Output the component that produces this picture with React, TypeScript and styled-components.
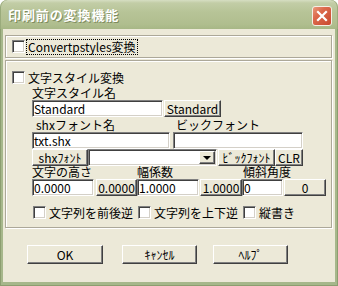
import React from 'react';
import styled, { createGlobalStyle } from 'styled-components';

const GlobalStyle = createGlobalStyle`
  html, body { margin: 0; padding: 0; background: #fff; }
  body { font-family: "Noto Sans CJK JP", sans-serif; font-size: 12px; color: #000; }
  * { box-sizing: border-box; }
`;

const Window = styled.div`
  width: 338px;
  height: 286px;
  display: flex;
  flex-direction: column;
  border-radius: 7px 7px 0 0;
  overflow: hidden;
  background: #a6b78b;
`;

const TitleBar = styled.div`
  height: 29px;
  flex: none;
  display: flex;
  align-items: flex-start;
  justify-content: space-between;
  padding: 0 6px 0 8px;
  background: linear-gradient(
    to bottom,
    #d6dec2 0px,
    #c2cda6 3px,
    #b7c497 12px,
    #b0be8f 24px,
    #a7b786 29px
  );
  border-radius: 7px 7px 0 0;
  box-shadow: inset 1px 0 0 #9aab7c, inset -1px 0 0 #9aab7c;
`;

const TitleText = styled.span`
  margin-top: 7px;
  color: #fff;
  font-weight: 700;
  font-size: 13px;
  line-height: 16px;
  letter-spacing: 0.9px;
  text-shadow: 1px 1px 0 #7d8b5e;
`;

const CloseButton = styled.div`
  margin-top: 6px;
  width: 20px;
  height: 20px;
  border-radius: 3px;
  border: 1px solid #f4efe6;
  background: linear-gradient(135deg, #e99a7c 0%, #dc6a4c 35%, #c9482f 100%);
  display: flex;
  align-items: center;
  justify-content: center;
`;

const Frame = styled.div`
  flex: 1;
  display: flex;
  padding: 0 3px 4px 3px;
  background: #a6b78b;
  box-shadow: inset 1px 0 0 #8c9e70, inset -1px 0 0 #8c9e70, inset 0 -1px 0 #8c9e70;
`;

const Client = styled.div`
  flex: 1;
  display: flex;
  flex-direction: column;
  background: #ece9d8;
  padding: 6px 0 0 2px;
`;

const Group = styled.div<{ $h: number; $mt: number }>`
  width: 327px;
  height: ${(p) => p.$h}px;
  margin-top: ${(p) => p.$mt}px;
  flex: none;
  border: 1px solid #aca899;
  box-shadow: 1px 1px 0 #fff, inset 1px 1px 0 #fff;
`;

const TopGroup = styled(Group)`
  display: flex;
  align-items: center;
  padding-left: 6px;
`;

const StyleGroup = styled(Group)`
  display: flex;
  flex-direction: column;
  padding-left: 26px;
`;

const Row = styled.div<{ $h: number; $mt?: number; $ml?: number }>`
  display: flex;
  align-items: stretch;
  height: ${(p) => p.$h}px;
  margin-top: ${(p) => p.$mt ?? 0}px;
  margin-left: ${(p) => p.$ml ?? 0}px;
  flex: none;
`;

const Check = styled.div`
  width: 13px;
  height: 13px;
  flex: none;
  background: #fff;
  border: 1px solid;
  border-color: #808080 #fff #fff #808080;
  box-shadow: inset 1px 1px 0 #404040, inset -1px -1px 0 #d4d0c8;
`;

const CheckItem = styled.div<{ $w?: number }>`
  display: flex;
  align-items: center;
  width: ${(p) => (p.$w ? `${p.$w}px` : 'auto')};
  flex: none;
`;

const CheckText = styled.span`
  margin-left: 3px;
  line-height: 14px;
  white-space: nowrap;
`;

const FocusText = styled(CheckText)`
  margin-left: 2px;
  padding: 0 1px;
  line-height: 14px;
  outline: 1px dotted #000;
`;

const Label = styled.span<{ $w?: number; $pl?: number }>`
  display: flex;
  align-items: center;
  width: ${(p) => (p.$w ? `${p.$w}px` : 'auto')};
  padding-left: ${(p) => p.$pl ?? 0}px;
  flex: none;
  white-space: nowrap;
  line-height: 13px;
`;

const Field = styled.div<{ $w: number; $ml?: number }>`
  width: ${(p) => p.$w}px;
  margin-left: ${(p) => p.$ml ?? 0}px;
  flex: none;
  background: #fff;
  border: 1px solid;
  border-color: #808080 #fff #fff #808080;
  box-shadow: inset 1px 1px 0 #404040, inset -1px -1px 0 #d4d0c8;
  display: flex;
  align-items: center;
  padding: 0 0 0 1px;
  line-height: 13px;
  white-space: nowrap;
  overflow: hidden;
`;

const ComboField = styled(Field)`
  justify-content: space-between;
  padding: 1px;
`;

const ArrowButton = styled.div`
  width: 16px;
  align-self: stretch;
  background: #ece9d8;
  border: 1px solid;
  border-color: #fff #404040 #404040 #fff;
  box-shadow: inset -1px -1px 0 #808080;
  display: flex;
  align-items: center;
  justify-content: center;
`;

const Arrow = styled.div`
  width: 0;
  height: 0;
  border-left: 4px solid transparent;
  border-right: 4px solid transparent;
  border-top: 4px solid #000;
  margin-right: 1px;
`;

const Button = styled.div<{ $w: number; $ml?: number }>`
  width: ${(p) => p.$w}px;
  margin-left: ${(p) => p.$ml ?? 0}px;
  flex: none;
  background: #ece9d8;
  border: 1px solid;
  border-color: #fff #404040 #404040 #fff;
  box-shadow: inset -1px -1px 0 #808080;
  display: flex;
  align-items: center;
  justify-content: center;
  line-height: 13px;
  white-space: nowrap;
`;

const Footer = styled.div`
  display: flex;
  height: 19px;
  margin-top: 17px;
  padding-left: 22px;
  flex: none;
`;

export default function App() {
  return (
    <>
      <GlobalStyle />
      <Window>
        <TitleBar>
          <TitleText>印刷前の変換機能</TitleText>
          <CloseButton>
            <svg width="12" height="12" viewBox="0 0 12 12">
              <path d="M2 2 L10 10 M10 2 L2 10" stroke="#fff" strokeWidth="2.2" strokeLinecap="square" />
            </svg>
          </CloseButton>
        </TitleBar>
        <Frame>
          <Client>
            <TopGroup $h={23} $mt={0}>
              <CheckItem>
                <Check />
                <FocusText>Convertpstyles変換</FocusText>
              </CheckItem>
            </TopGroup>
            <StyleGroup $h={168} $mt={2}>
              <Row $h={13} $mt={10} $ml={-20}>
                <CheckItem>
                  <Check />
                  <CheckText>文字スタイル変換</CheckText>
                </CheckItem>
              </Row>
              <Row $h={14} $mt={1}>
                <Label>文字スタイル名</Label>
              </Row>
              <Row $h={17} $mt={1}>
                <Field $w={131}>Standard</Field>
                <Button $w={57} $ml={1}>Standard</Button>
              </Row>
              <Row $h={14} $mt={0}>
                <Label $w={144} $pl={4}>shxフォント名</Label>
                <Label>ビックフォント</Label>
              </Row>
              <Row $h={17} $mt={1}>
                <Field $w={138}>txt.shx</Field>
                <Field $w={130} $ml={3} />
              </Row>
              <Row $h={17}>
                <Button $w={56}>shxﾌｫﾝﾄ</Button>
                <ComboField $w={129}>
                  <span />
                  <ArrowButton>
                    <Arrow />
                  </ArrowButton>
                </ComboField>
                <Button $w={57} $ml={1}>ﾋﾞｯｸﾌｫﾝﾄ</Button>
                <Button $w={28}>CLR</Button>
              </Row>
              <Row $h={13} $mt={-1}>
                <Label $w={105}>文字の高さ</Label>
                <Label $w={106}>幅係数</Label>
                <Label>傾斜角度</Label>
              </Row>
              <Row $h={17} $mt={1}>
                <Field $w={62}>0.0000</Field>
                <Button $w={41} $ml={2}>0.0000</Button>
                <Field $w={62}>1.0000</Field>
                <Button $w={42} $ml={1}>1.0000</Button>
                <Field $w={41}>0</Field>
                <Button $w={42} $ml={1}>0</Button>
              </Row>
              <Row $h={13} $mt={10} $ml={1}>
                <CheckItem $w={105}>
                  <Check />
                  <CheckText>文字列を前後逆</CheckText>
                </CheckItem>
                <CheckItem $w={105}>
                  <Check />
                  <CheckText>文字列を上下逆</CheckText>
                </CheckItem>
                <CheckItem>
                  <Check />
                  <CheckText>縦書き</CheckText>
                </CheckItem>
              </Row>
            </StyleGroup>
            <Footer>
              <Button $w={76}>OK</Button>
              <Button $w={75} $ml={19}>ｷｬﾝｾﾙ</Button>
              <Button $w={75} $ml={16}>ﾍﾙﾌﾟ</Button>
            </Footer>
          </Client>
        </Frame>
      </Window>
    </>
  );
}
